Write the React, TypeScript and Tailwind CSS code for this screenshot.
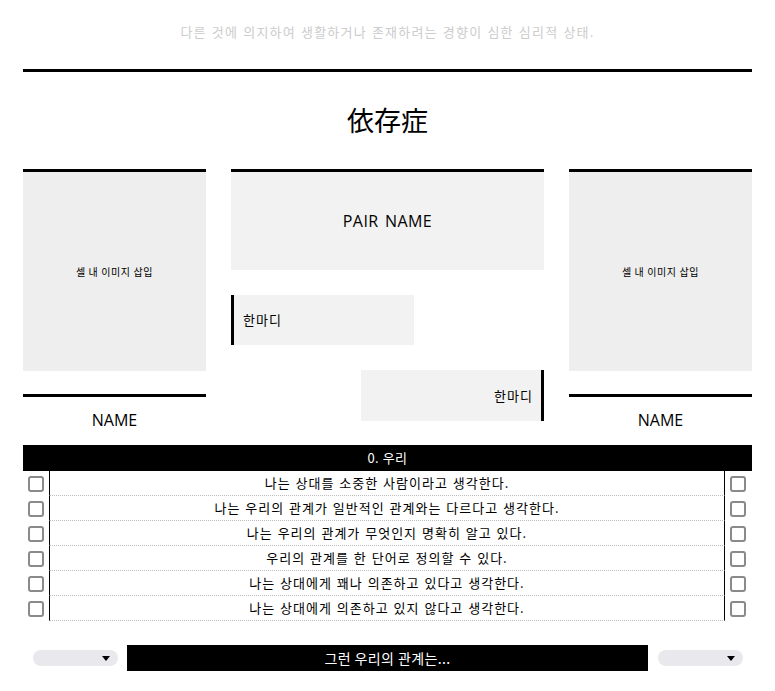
import React from "react";

const KR = '"Noto Sans CJK KR", "Noto Sans", sans-serif';
const LATIN = '"Open Sans", "Noto Sans", sans-serif';

const items = [
  "나는 상대를 소중한 사람이라고 생각한다.",
  "나는 우리의 관계가 일반적인 관계와는 다르다고 생각한다.",
  "나는 우리의 관계가 무엇인지 명확히 알고 있다.",
  "우리의 관계를 한 단어로 정의할 수 있다.",
  "나는 상대에게 꽤나 의존하고 있다고 생각한다.",
  "나는 상대에게 의존하고 있지 않다고 생각한다.",
];

function Box() {
  return (
    <span className="block h-4 w-4 rounded-[3px] border-2 border-[#8a8a8a] bg-white" />
  );
}

function Pill() {
  return (
    <div className="flex h-4 w-[85px] items-center justify-end rounded-full bg-[#e9e9ed] pr-2">
      <svg width="8" height="5" viewBox="0 0 8 5">
        <path d="M0 0 L8 0 L4 5 Z" fill="#000" />
      </svg>
    </div>
  );
}

function Portrait() {
  return (
    <div className="flex flex-col">
      <div className="flex h-[202px] items-center justify-center border-t-[3px] border-black bg-[#eeeeee] text-[10px] tracking-[0.6px] text-black">
        셀 내 이미지 삽입
      </div>
      <div className="mt-[23px] border-t-[3px] border-black" />
      <div className="flex h-[45px] items-center justify-center text-[16px] text-black" style={{ fontFamily: LATIN }}>
        NAME
      </div>
    </div>
  );
}

export default function App() {
  return (
    <div className="min-h-[691px] bg-white px-[23px]" style={{ fontFamily: KR }}>
      <div className="flex h-[69px] items-start justify-center pt-[22px] text-[13px] tracking-[1.2px] [word-spacing:1px] text-[#cccccc]">
        다른 것에 의지하여 생활하거나 존재하려는 경향이 심한 심리적 상태.
      </div>
      <div className="border-t-[3px] border-black" />
      <div className="flex h-[97px] items-center justify-center text-[27px] text-black">
        依存症
      </div>

      <div className="grid grid-cols-[183px_1fr_183px] gap-x-[25px]">
        <Portrait />
        <div className="flex flex-col">
          <div
            className="flex h-[101px] items-center justify-center border-t-[3px] border-black bg-[#f2f2f2] text-[16px] tracking-[0.4px] [word-spacing:2px] text-black"
            style={{ fontFamily: LATIN }}
          >
            PAIR NAME
          </div>
          <div className="mt-[25px] flex h-[50px] w-[183px] items-center border-l-[3px] border-black bg-[#f2f2f2] pl-[9px] text-[13px] tracking-[1px] text-black">
            한마디
          </div>
          <div className="mt-[25px] flex h-[51px] w-[183px] items-center justify-end self-end border-r-[3px] border-black bg-[#f2f2f2] pr-[8px] text-[13px] tracking-[1px] text-black">
            한마디
          </div>
        </div>
        <Portrait />
      </div>

      <div className="mt-[3px]">
        <div className="flex h-[26px] items-center justify-center bg-black text-[13px] tracking-[0.5px] text-white">
          0. 우리
        </div>
        <div className="grid grid-cols-[26px_1fr_27px]">
          {items.map((t, i) => (
            <React.Fragment key={i}>
              <div className="flex h-[25px] items-center justify-center pr-[1px]">
                <Box />
              </div>
              <div className="flex h-[25px] items-center justify-center border-x border-b border-black border-b-[#bdbdbd] [border-bottom-style:dotted] text-[13px] tracking-[1px] [word-spacing:1px] text-black">
                {t}
              </div>
              <div className="flex h-[25px] items-center justify-center pr-[2px]">
                <Box />
              </div>
            </React.Fragment>
          ))}
        </div>
      </div>

      <div className="mt-[24px] grid grid-cols-[104px_1fr_104px] items-center">
        <div className="flex justify-center">
          <Pill />
        </div>
        <div className="flex h-[26px] items-center justify-center bg-black text-[14px] tracking-[0.4px] text-white">
          그런 우리의 관계는...
        </div>
        <div className="flex justify-center">
          <Pill />
        </div>
      </div>
    </div>
  );
}
